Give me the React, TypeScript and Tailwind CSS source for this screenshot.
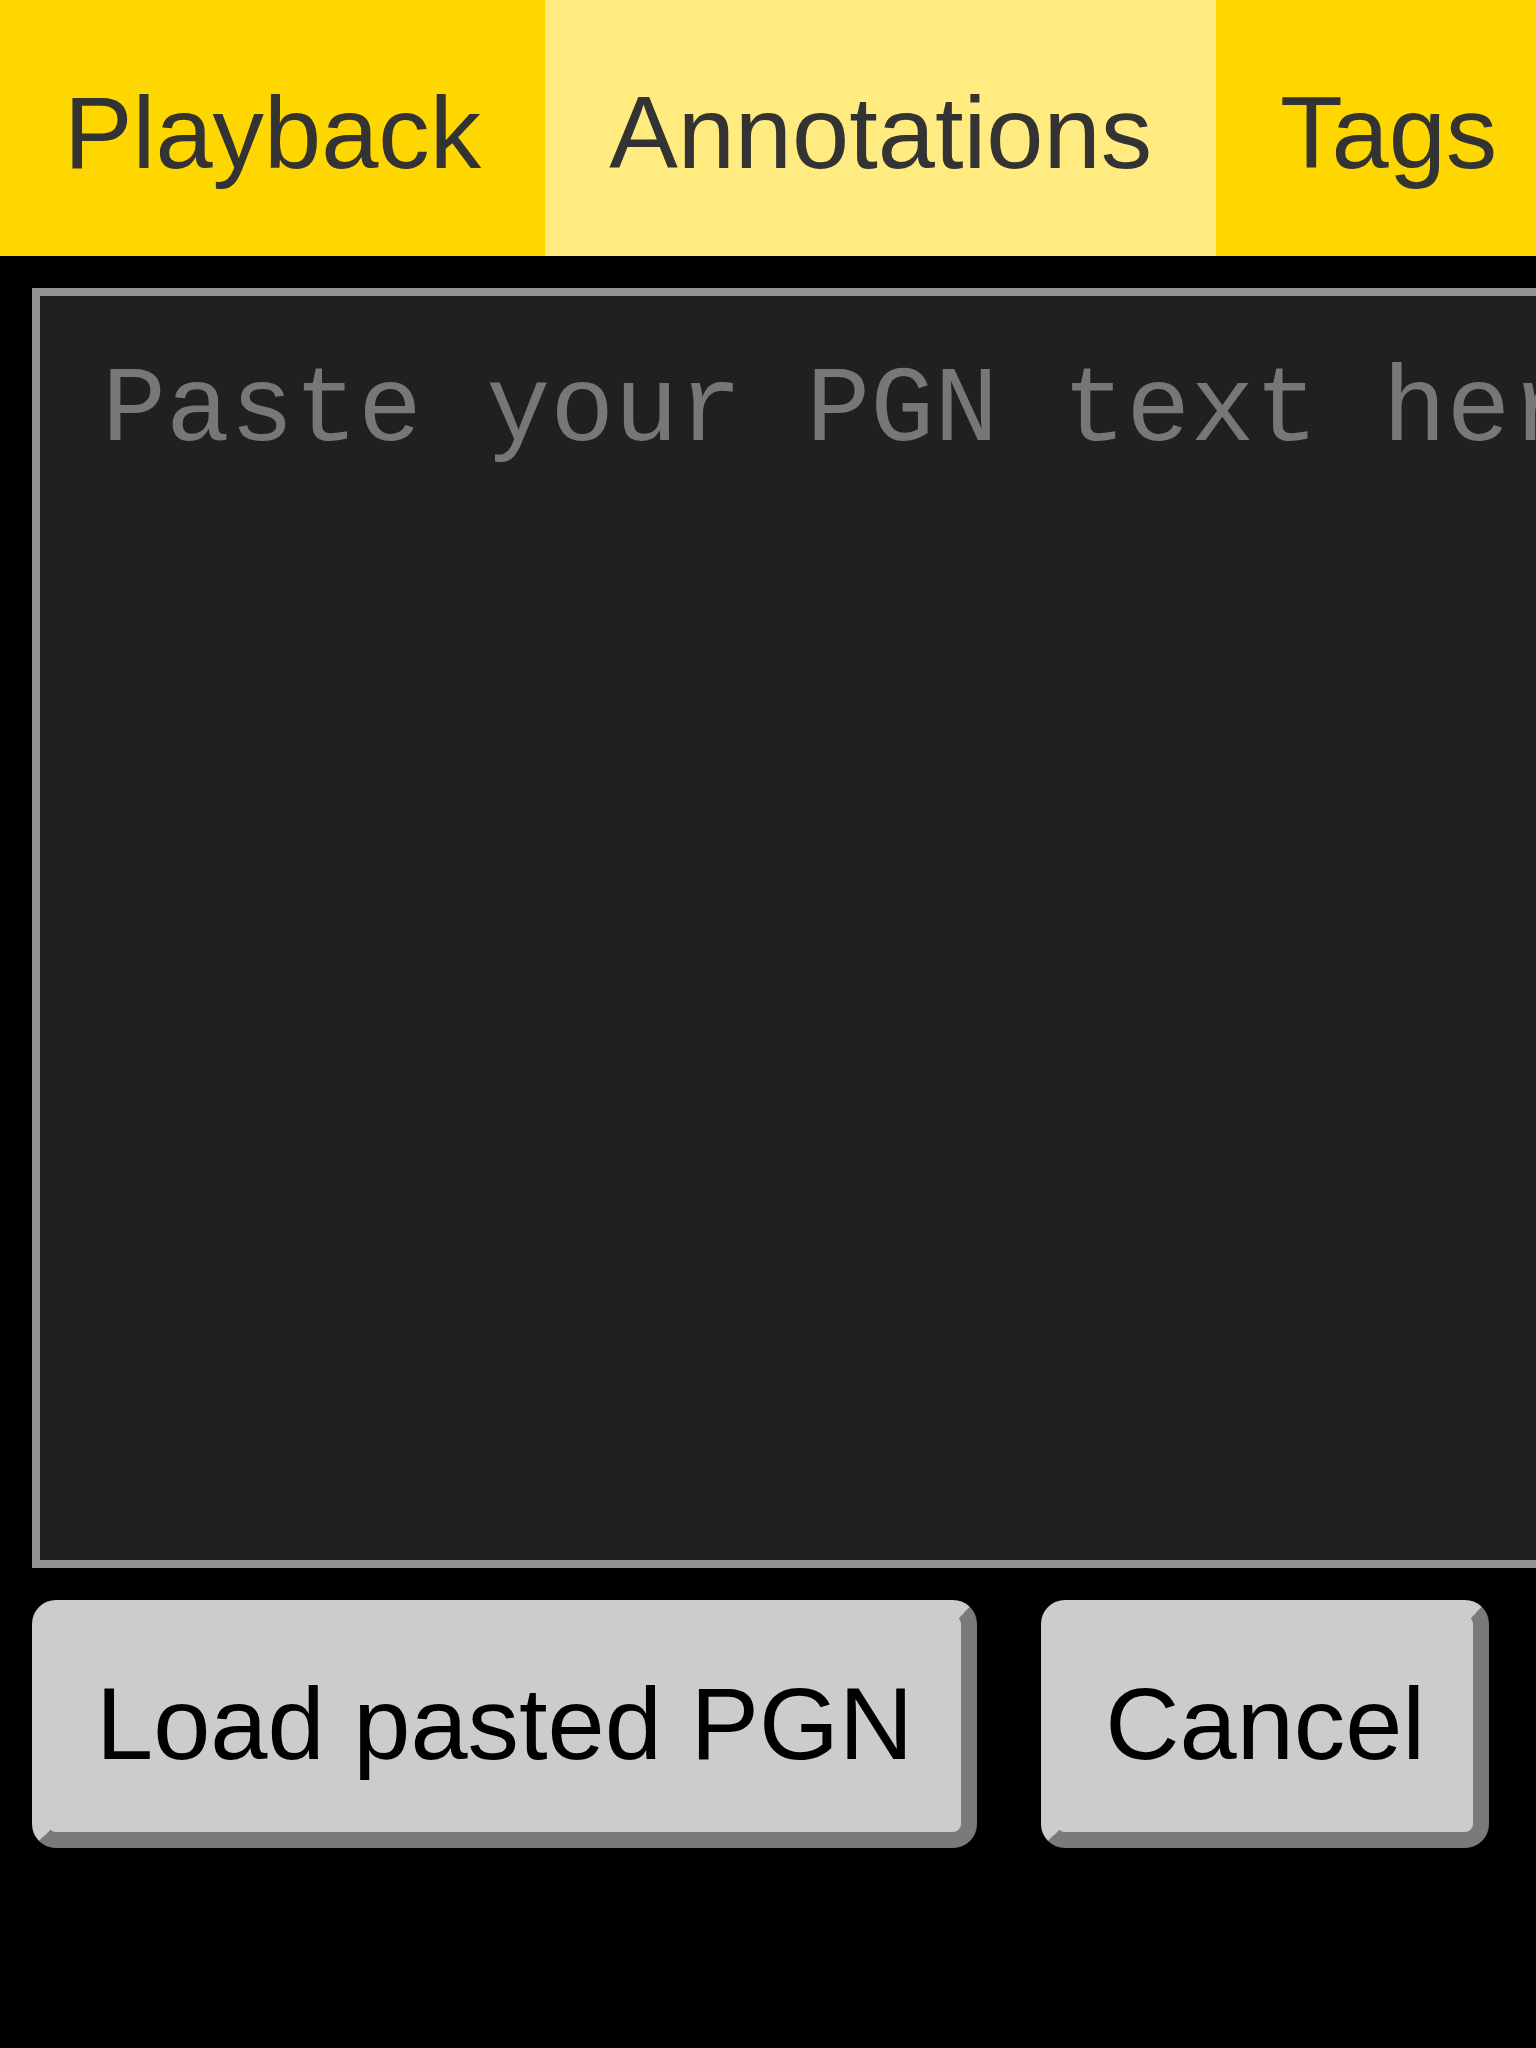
import React from 'react';

// 标签页
const tabs = [
  { label: 'Playback', active: false },
  { label: 'Annotations', active: true },
  { label: 'Tags', active: false },
];

function TabBar() {
  return (
    <div className="flex w-full overflow-hidden whitespace-nowrap">
      {tabs.map((tab) => (
        <div
          key={tab.label}
          className={`shrink-0 px-16 pt-[74px] pb-[64px] text-[102.8px] leading-[1.149] text-[#333333] ${
            tab.active ? 'bg-[#ffeb80]' : 'bg-[#ffd700]'
          }`}
        >
          {tab.label}
        </div>
      ))}
      <div className="flex-1 bg-[#ffd700]" />
    </div>
  );
}

function BevelButton({ children }: { children: React.ReactNode }) {
  return (
    <button
      type="button"
      className="shrink-0 rounded-[24px] border-[16px] border-t-[#cccccc] border-l-[#cccccc] border-r-[#7a7a7a] border-b-[#7a7a7a] bg-[#cccccc] px-12 py-[49px] text-[102.8px] leading-[1.149] text-black"
    >
      {children}
    </button>
  );
}

export default function App() {
  return (
    <div
      className="min-h-screen w-full overflow-hidden bg-black"
      style={{ fontFamily: '"Liberation Sans", Arial, sans-serif' }}
    >
      <TabBar />

      <div className="mt-8 ml-8 w-[1700px]">
        <textarea
          placeholder="Paste your PGN text here"
          className="block h-[1280px] w-full resize-none border-[8px] border-[#939393] bg-[#202020] py-[56px] pr-[56px] pl-[62px] text-[106.7px] leading-[1.133] text-[#cccccc] outline-none placeholder:text-[#777777]"
          style={{ fontFamily: '"Liberation Mono", "Courier New", monospace' }}
        />
      </div>

      <div className="mt-8 ml-8 flex gap-16">
        <BevelButton>Load pasted PGN</BevelButton>
        <BevelButton>Cancel</BevelButton>
      </div>
    </div>
  );
}
